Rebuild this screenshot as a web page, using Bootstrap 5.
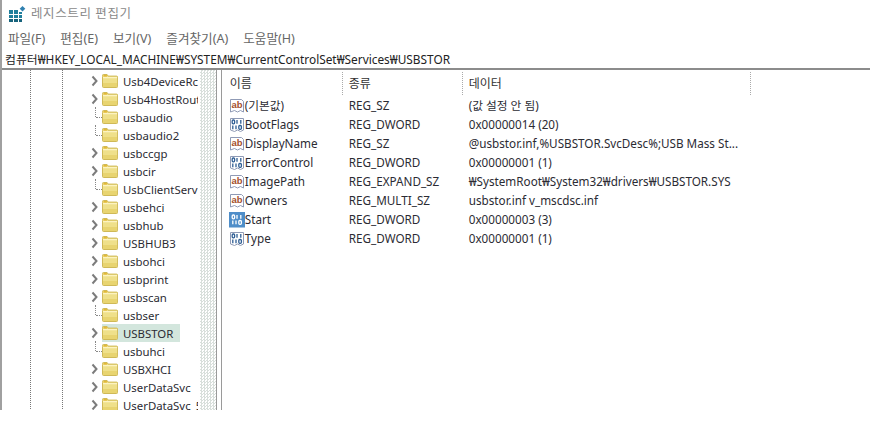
<!DOCTYPE html>
<html lang="ko">
<head>
<meta charset="utf-8">
<title>레지스트리 편집기</title>
<link rel="stylesheet" href="https://cdn.jsdelivr.net/npm/bootstrap@5.3.0/dist/css/bootstrap.min.css">
<style>
html,body{height:100%;margin:0;background:#fff}
body{font-family:"Noto Sans","Noto Sans CJK KR",sans-serif;font-size:11.7px;color:#2b2b33;overflow:hidden}
.win{width:870px;height:410px;border-left:2px solid #a0a0a0}
.titlebar{height:29px;padding-left:6px;color:#8a8a8a;font-size:12.5px;letter-spacing:.6px}
.menubar{height:21px;padding-left:6px;color:#666;gap:15px;font-size:12.6px}
.addr{height:17px;padding-top:2px;padding-left:3px;font-size:11.85px;color:#222;border-bottom:2px solid #8c8c8c;box-sizing:content-box;white-space:nowrap}
.panes{min-height:0}
.tree{width:215px;position:relative;overflow:hidden;padding-top:2px;border-right:1px solid #9a9a9a;
 background-image:
  repeating-linear-gradient(to bottom,#777 0 1px,transparent 1px 2px),
  repeating-linear-gradient(to bottom,#777 0 1px,transparent 1px 2px);
 background-size:1px 100%,1px 100%;background-position:28px 0,60px 0;background-repeat:no-repeat}
.dither{position:absolute;top:0;right:0;bottom:0;width:16px;background-color:#fff;
 background-image:conic-gradient(#d8dfdb 25%,transparent 0 50%,#d8dfdb 0 75%,transparent 0);background-size:3px 3px}
.node{height:18px;padding-left:88px;position:relative;white-space:nowrap}
.chev{width:12px;height:12px;flex:none}
.conn{width:12px;height:9px;flex:none;align-self:flex-start;position:relative}
.conn::before{content:"";position:absolute;left:5px;top:-1px;height:10px;border-left:1px dotted #888}
.conn::after{content:"";position:absolute;left:6px;top:9px;width:6px;border-top:1px dotted #888}
.fold{width:16px;height:14px;flex:none}
.lbl{margin-left:5px;width:75px;overflow:hidden;color:#2b2b33;line-height:17px;font-size:11.4px}
.sel .hl{position:absolute;left:100px;top:0;width:78px;height:18px;background:#d3e6dd}
.sel .chev,.sel .fold,.sel .lbl{position:relative}
.gutter{width:4px;flex:none}
.listp{border-left:1px solid #9a9a9a;width:650px;padding-top:2px}
.hdr{height:23px;margin-bottom:1px}
.hc{height:23px;padding-left:8px;border-right:1px dotted #aaa;font-size:12px;color:#333}
.c1{width:121px}.c2{width:120px}.c3{width:288px}
.hc.c2,.hc.c3{padding-left:6px}
.reg{height:19px;white-space:nowrap;color:#2b2b33}
.cn{width:121px;padding-left:7px}
.ct{width:120px;padding-left:6px}
.cd{padding-left:6px}
.ico{width:16px;height:16px;flex:none}
</style>
</head>
<body>
<svg width="0" height="0" class="position-absolute">
<defs>
<symbol id="i-fold" viewBox="0 0 16 14">
<path d="M.5 2.500V1.400q0-.9.9-.9h3.700l1 1.600h8.500q1 0 1 1v9.400q0 1-1 1H1.500q-1 0-1-1z" fill="#efe08a" stroke="#cfb957"/>
<path d="M1 3.200h14v1H1z" fill="#fff8cf"/><path d="M1 9h14v4H1z" fill="#e8d470"/><path d="M1.500 1.200h3.400v1.300H1.500z" fill="#e0ae22"/>
</symbol>
<symbol id="i-ab" viewBox="0 0 16 16">
<path d="M1.500 1.500h11l2 2v10.500l-3-1.500-3 1.500-3-1.500-4 1.500z" fill="#fff" stroke="#8f9ab5"/>
<text x="2.500" y="10" font-family="Liberation Sans,sans-serif" font-size="9.500" font-weight="700" fill="#a5502c">ab</text>
</symbol>
<symbol id="i-bin" viewBox="0 0 16 16">
<path d="M1.500 1.500h13v11.500l-3 1.500-3-1.500-3 1.500-4-1.500z" fill="#fff" stroke="#8f9ab5"/>
<g fill="none" stroke="#2f5e94" stroke-width="1.300"><rect x="3.200" y="3" width="2.400" height="3.800" rx="1"/><path d="M8 3v3.800M11.800 3v3.800M3.800 8.500v3.800M7 8.500v3.800"/><rect x="9.800" y="8.500" width="2.600" height="3.800" rx="1"/></g>
</symbol>
<symbol id="i-binsel" viewBox="0 0 16 16">
<rect width="16" height="15.500" fill="#4f8ec9"/>
<g fill="none" stroke="#fff" stroke-width="1.300"><rect x="3.200" y="3" width="2.400" height="3.800" rx="1"/><path d="M8 3v3.800M11.800 3v3.800M3.800 8.500v3.800M7 8.500v3.800"/><rect x="9.800" y="8.500" width="2.600" height="3.800" rx="1"/></g>
</symbol>
<symbol id="i-chev" viewBox="0 0 12 12">
<path d="M2.500 1.500l4 4.500-4 4.500" fill="none" stroke="#7c7c7c" stroke-width="2"/>
</symbol>
</defs>
</svg>

<div class="win d-flex flex-column">
 <div class="titlebar d-flex align-items-center gap-1">
  <svg width="19" height="17" viewBox="0 0 19 17" class="flex-none">
   <g fill="#1f7f9c"><rect x="1" y="4" width="4" height="4"/><rect x="6" y="4" width="4" height="4"/><rect x="11" y="6" width="3" height="2"/><rect x="1" y="9" width="4" height="3"/><rect x="6" y="9" width="4" height="3"/><rect x="11" y="9" width="3" height="3"/><rect x="1" y="13" width="4" height="3" fill="#17637c"/><rect x="6" y="13" width="4" height="3" fill="#17637c"/><rect x="11" y="13" width="3" height="3" fill="#17637c"/></g>
   <path d="M14.500 0l2.800 2.800-2.800 2.800-2.800-2.800z" fill="#2f80b0"/>
  </svg>
  <span>레지스트리 편집기</span>
 </div>
 <div class="menubar d-flex align-items-center">
  <span>파일(F)</span><span>편집(E)</span><span>보기(V)</span><span>즐겨찾기(A)</span><span>도움말(H)</span>
 </div>
 <div class="addr d-flex align-items-center">컴퓨터₩HKEY_LOCAL_MACHINE₩SYSTEM₩CurrentControlSet₩Services₩USBSTOR</div>
 <div class="panes d-flex flex-grow-1">
  <div class="tree">
   <div class="dither"></div>
   <div class="node d-flex align-items-center"><svg class="chev"><use href="#i-chev"/></svg><svg class="fold"><use href="#i-fold"/></svg><span class="lbl">Usb4DeviceRc</span></div>
   <div class="node d-flex align-items-center"><svg class="chev"><use href="#i-chev"/></svg><svg class="fold"><use href="#i-fold"/></svg><span class="lbl">Usb4HostRout</span></div>
   <div class="node d-flex align-items-center"><i class="conn"></i><svg class="fold"><use href="#i-fold"/></svg><span class="lbl">usbaudio</span></div>
   <div class="node d-flex align-items-center"><i class="conn"></i><svg class="fold"><use href="#i-fold"/></svg><span class="lbl">usbaudio2</span></div>
   <div class="node d-flex align-items-center"><svg class="chev"><use href="#i-chev"/></svg><svg class="fold"><use href="#i-fold"/></svg><span class="lbl">usbccgp</span></div>
   <div class="node d-flex align-items-center"><svg class="chev"><use href="#i-chev"/></svg><svg class="fold"><use href="#i-fold"/></svg><span class="lbl">usbcir</span></div>
   <div class="node d-flex align-items-center"><i class="conn"></i><svg class="fold"><use href="#i-fold"/></svg><span class="lbl">UsbClientServ</span></div>
   <div class="node d-flex align-items-center"><svg class="chev"><use href="#i-chev"/></svg><svg class="fold"><use href="#i-fold"/></svg><span class="lbl">usbehci</span></div>
   <div class="node d-flex align-items-center"><svg class="chev"><use href="#i-chev"/></svg><svg class="fold"><use href="#i-fold"/></svg><span class="lbl">usbhub</span></div>
   <div class="node d-flex align-items-center"><svg class="chev"><use href="#i-chev"/></svg><svg class="fold"><use href="#i-fold"/></svg><span class="lbl">USBHUB3</span></div>
   <div class="node d-flex align-items-center"><svg class="chev"><use href="#i-chev"/></svg><svg class="fold"><use href="#i-fold"/></svg><span class="lbl">usbohci</span></div>
   <div class="node d-flex align-items-center"><svg class="chev"><use href="#i-chev"/></svg><svg class="fold"><use href="#i-fold"/></svg><span class="lbl">usbprint</span></div>
   <div class="node d-flex align-items-center"><svg class="chev"><use href="#i-chev"/></svg><svg class="fold"><use href="#i-fold"/></svg><span class="lbl">usbscan</span></div>
   <div class="node d-flex align-items-center"><i class="conn"></i><svg class="fold"><use href="#i-fold"/></svg><span class="lbl">usbser</span></div>
   <div class="node sel d-flex align-items-center"><span class="hl"></span><svg class="chev"><use href="#i-chev"/></svg><svg class="fold"><use href="#i-fold"/></svg><span class="lbl">USBSTOR</span></div>
   <div class="node d-flex align-items-center"><i class="conn"></i><svg class="fold"><use href="#i-fold"/></svg><span class="lbl">usbuhci</span></div>
   <div class="node d-flex align-items-center"><svg class="chev"><use href="#i-chev"/></svg><svg class="fold"><use href="#i-fold"/></svg><span class="lbl">USBXHCI</span></div>
   <div class="node d-flex align-items-center"><svg class="chev"><use href="#i-chev"/></svg><svg class="fold"><use href="#i-fold"/></svg><span class="lbl">UserDataSvc</span></div>
   <div class="node d-flex align-items-center"><svg class="chev"><use href="#i-chev"/></svg><svg class="fold"><use href="#i-fold"/></svg><span class="lbl">UserDataSvc_5</span></div>
  </div>
  <div class="gutter"></div>
  <div class="listp">
   <div class="hdr d-flex">
    <div class="hc c1 d-flex align-items-center">이름</div>
    <div class="hc c2 d-flex align-items-center">종류</div>
    <div class="hc c3 d-flex align-items-center">데이터</div>
   </div>
   <div class="reg d-flex align-items-center"><div class="cn d-flex align-items-center"><svg class="ico"><use href="#i-ab"/></svg>(기본값)</div><div class="ct">REG_SZ</div><div class="cd">(값 설정 안 됨)</div></div>
   <div class="reg d-flex align-items-center"><div class="cn d-flex align-items-center"><svg class="ico"><use href="#i-bin"/></svg>BootFlags</div><div class="ct">REG_DWORD</div><div class="cd">0x00000014 (20)</div></div>
   <div class="reg d-flex align-items-center"><div class="cn d-flex align-items-center"><svg class="ico"><use href="#i-ab"/></svg>DisplayName</div><div class="ct">REG_SZ</div><div class="cd">@usbstor.inf,%USBSTOR.SvcDesc%;USB Mass St...</div></div>
   <div class="reg d-flex align-items-center"><div class="cn d-flex align-items-center"><svg class="ico"><use href="#i-bin"/></svg>ErrorControl</div><div class="ct">REG_DWORD</div><div class="cd">0x00000001 (1)</div></div>
   <div class="reg d-flex align-items-center"><div class="cn d-flex align-items-center"><svg class="ico"><use href="#i-ab"/></svg>ImagePath</div><div class="ct">REG_EXPAND_SZ</div><div class="cd">₩SystemRoot₩System32₩drivers₩USBSTOR.SYS</div></div>
   <div class="reg d-flex align-items-center"><div class="cn d-flex align-items-center"><svg class="ico"><use href="#i-ab"/></svg>Owners</div><div class="ct">REG_MULTI_SZ</div><div class="cd">usbstor.inf v_mscdsc.inf</div></div>
   <div class="reg d-flex align-items-center"><div class="cn d-flex align-items-center"><svg class="ico"><use href="#i-binsel"/></svg>Start</div><div class="ct">REG_DWORD</div><div class="cd">0x00000003 (3)</div></div>
   <div class="reg d-flex align-items-center"><div class="cn d-flex align-items-center"><svg class="ico"><use href="#i-bin"/></svg>Type</div><div class="ct">REG_DWORD</div><div class="cd">0x00000001 (1)</div></div>
  </div>
 </div>
</div>
<script src="https://cdn.jsdelivr.net/npm/bootstrap@5.3.0/dist/js/bootstrap.bundle.min.js"></script>
</body>
</html>
